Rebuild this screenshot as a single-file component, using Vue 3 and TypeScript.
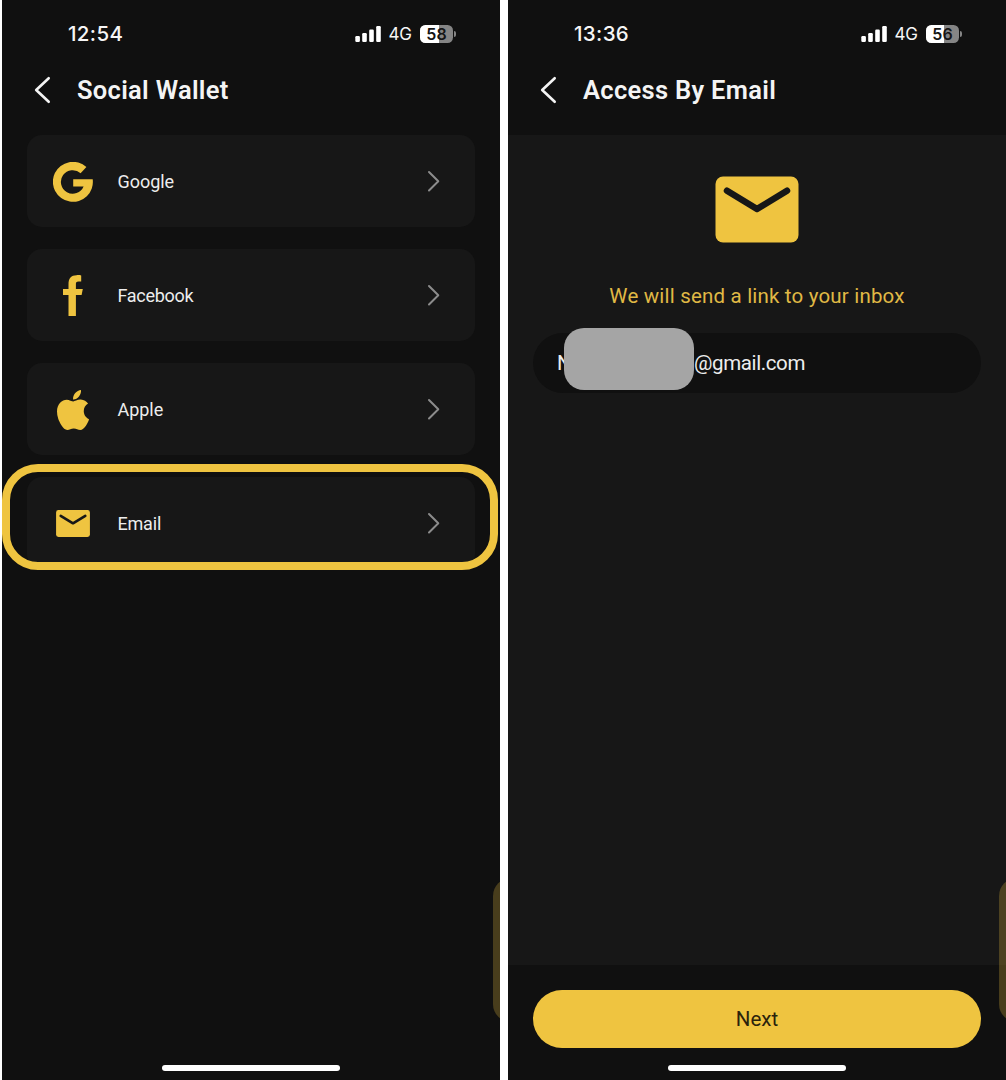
<script setup lang="ts">
type IconName = 'google' | 'facebook' | 'apple' | 'email'

interface Provider {
  name: string
  icon: IconName
  highlighted?: boolean
}

interface Screen {
  id: string
  time: string
  battery: number
  title: string
}

const screens: Screen[] = [
  { id: 'wallet', time: '12:54', battery: 58, title: 'Social Wallet' },
  { id: 'email', time: '13:36', battery: 56, title: 'Access By Email' },
]

const providers: Provider[] = [
  { name: 'Google', icon: 'google' },
  { name: 'Facebook', icon: 'facebook' },
  { name: 'Apple', icon: 'apple' },
  { name: 'Email', icon: 'email', highlighted: true },
]
</script>

<template>
  <main class="board">
    <section v-for="screen in screens" :key="screen.id" class="phone">
      <div class="status">
        <span class="time">{{ screen.time }}</span>
        <div class="indicators">
          <svg class="signal" width="26" height="16" viewBox="0 0 26 16">
            <rect x="0.3" y="10" width="4.6" height="6" rx="1.2" />
            <rect x="7.2" y="7" width="4.6" height="9" rx="1.2" />
            <rect x="14.2" y="3.5" width="4.6" height="12.5" rx="1.2" />
            <rect x="21.2" y="0" width="4.6" height="16" rx="1.2" />
          </svg>
          <span class="network">4G</span>
          <div class="battery">
            <div class="cell">
              <div class="charge" :style="{ width: screen.battery + '%' }"></div>
              <span class="level">{{ screen.battery }}</span>
            </div>
            <div class="cap"></div>
          </div>
        </div>
      </div>

      <header class="header">
        <svg class="back" width="18" height="28" viewBox="0 0 18 28">
          <path d="M15.7 2.2 3.2 14 15.7 25.8" />
        </svg>
        <h1 class="title">{{ screen.title }}</h1>
      </header>

      <div v-if="screen.id === 'wallet'" class="list">
        <div v-for="p in providers" :key="p.name" class="card">
          <div class="icon">
            <svg v-if="p.icon === 'google'" width="40" height="40" viewBox="0 0 40 40">
              <path d="M33.4 5.1A20 20 0 1 0 39.7 17.2H20.2V24.5H30.6A11.8 11.8 0 1 1 27.6 11.2Z" />
            </svg>
            <svg v-else-if="p.icon === 'facebook'" width="20" height="41" viewBox="0 0 20 41">
              <path d="M5.5 41V20H0V14H5.5V9.5C5.5 3 8.2.3 13.5.2 15.5 0 17 .2 18.2.4V6.5H15.5C13.3 6.5 12.9 7.5 12.9 9.3V14H19.8L18.6 20H12.9V41Z" />
            </svg>
            <svg v-else-if="p.icon === 'apple'" width="32" height="40" viewBox="4 32 376 448" preserveAspectRatio="none">
              <path d="M318.7 268.7c-.2-36.7 16.4-64.4 50-84.8-18.8-26.9-47.2-41.7-84.7-44.6-35.5-2.8-74.3 20.7-88.5 20.7-15 0-49.4-19.7-76.4-19.7C63.3 141.2 4 184.8 4 273.5q0 39.3 14.4 81.2c12.8 36.7 59 126.7 107.2 125.2 25.2-.6 43-17.9 75.8-17.9 31.8 0 48.3 17.9 76.4 17.9 48.6-.7 90.4-82.5 102.6-119.3-65.2-30.7-61.7-90-61.7-91.9zm-56.6-164.2c27.3-32.4 24.8-61.9 24-72.5-24.1 1.4-52 16.4-67.9 34.9-17.5 19.8-27.8 44.3-25.6 71.9 26.1 2 49.9-11.4 69.5-34.3z" />
            </svg>
            <svg v-else width="34" height="27" viewBox="0 0 84 67">
              <rect width="84" height="67" rx="6" />
              <path class="flap" d="M11.5 14.5 42 33 72.500 14.500" />
            </svg>
          </div>
          <span class="label" :class="p.icon">{{ p.name }}</span>
          <svg class="chevron" width="13" height="22" viewBox="0 0 13 22">
            <path d="M2 2 11.300 11.200 2 20.500" />
          </svg>
          <div v-if="p.highlighted" class="ring"></div>
        </div>
      </div>

      <template v-else>
        <div class="content">
          <svg class="mail" width="84" height="67" viewBox="0 0 84 67">
            <rect x=".5" y=".5" width="83" height="66" rx="7.500" />
            <path class="flap" d="M12 14.700 42 33 72 14.700" />
          </svg>
          <p class="hint">We will send a link to your inbox</p>
          <div class="field">
            <span class="initial">N</span>
            <span class="domain">@gmail.com</span>
            <div class="mask"></div>
          </div>
        </div>
        <footer class="footer">
          <button class="next" type="button"><span>Next</span></button>
        </footer>
      </template>

      <div class="side-tab"></div>
      <div class="home"></div>
    </section>
  </main>
</template>

<style>
body {
  margin: 0;
  background: #fff;
}
</style>

<style scoped>
* {
  box-sizing: border-box;
}

.board {
  display: flex;
  gap: 8px;
  width: 1006px;
  height: 1080px;
  padding-left: 2px;
  background: #fff;
  font-family: Roboto, "Liberation Sans", sans-serif;
  color: #ededed;
}

.phone {
  position: relative;
  display: flex;
  flex-direction: column;
  width: 498px;
  height: 1080px;
  overflow: hidden;
  background: #101010;
}

.status {
  display: flex;
  justify-content: space-between;
  align-items: center;
  height: 67px;
  padding: 0 44px 0 66px;
  font-family: Inter, sans-serif;
  color: #f6f6f6;
}

.time {
  font-size: 20.5px;
  font-weight: 500;
  letter-spacing: 0.35px;
}

.indicators {
  display: flex;
  align-items: center;
}

.signal {
  fill: #fff;
}

.network {
  margin-left: 8px;
  width: 24px;
  padding-top: 1px;
  font-size: 17px;
  letter-spacing: -0.2px;
  white-space: nowrap;
}

.battery {
  display: flex;
  align-items: center;
  gap: 1px;
  margin-left: 7.5px;
}

.cell {
  position: relative;
  display: flex;
  justify-content: center;
  align-items: center;
  width: 33px;
  height: 18px;
  border-radius: 5.5px;
  overflow: hidden;
  background: #858585;
}

.charge {
  position: absolute;
  inset: 0 auto 0 0;
  background: #fff;
}

.level {
  position: relative;
  font-size: 16px;
  font-weight: 600;
  line-height: 18px;
  color: #151515;
}

.cap {
  width: 2px;
  height: 6px;
  border-radius: 0 2px 2px 0;
  background: #858585;
}

.header {
  display: flex;
  align-items: center;
  height: 68px;
  padding: 0 0 23px 31px;
}

.back {
  fill: none;
  stroke: #f4f4f4;
  stroke-width: 2.6;
  stroke-linecap: round;
  stroke-linejoin: round;
}

.title {
  margin: 0 0 0 26px;
  font-size: 25.5px;
  font-weight: 600;
  line-height: 30px;
  letter-spacing: 0.3px;
  white-space: nowrap;
  color: #f4f4f4;
}

.list {
  display: flex;
  flex-direction: column;
  gap: 22px;
  padding: 0 25px;
}

.card {
  position: relative;
  display: flex;
  align-items: center;
  height: 92px;
  padding: 0 35px 0 22px;
  border-radius: 15px;
  background: #171717;
}

.icon {
  display: flex;
  justify-content: center;
  width: 47px;
  margin-right: 1px;
  padding-top: 1px;
  fill: #efc440;
}

.flap {
  fill: none;
  stroke: #171717;
  stroke-width: 6.5;
  stroke-linecap: round;
  stroke-linejoin: round;
}

.label {
  flex: 1;
  margin-left: 20.5px;
  padding-top: 1px;
  font-size: 18px;
  letter-spacing: -0.05px;
}

.label.facebook {
  letter-spacing: -0.3px;
}

.label.email {
  letter-spacing: -0.2px;
}

.chevron {
  fill: none;
  stroke: #8c8c8c;
  stroke-width: 2;
  stroke-linecap: round;
  stroke-linejoin: round;
}

.ring {
  position: absolute;
  top: -13px;
  left: -25px;
  width: 496px;
  height: 106px;
  border: 8px solid #efc440;
  border-radius: 36px;
}

.content {
  display: flex;
  flex-direction: column;
  align-items: center;
  height: 830px;
  padding: 41px 25px 0;
  background: #171717;
}

.mail {
  fill: #efc440;
}

.hint {
  margin: 38px 0 22px;
  font-size: 20.5px;
  line-height: 30px;
  letter-spacing: 0.19px;
  white-space: nowrap;
  color: #e0b945;
}

.field {
  position: relative;
  display: flex;
  align-items: center;
  width: 448px;
  height: 60px;
  padding-left: 24px;
  border-radius: 30px;
  background: #101010;
  font-size: 20.5px;
}

.initial {
  width: 137px;
}

.domain {
  letter-spacing: -0.38px;
}

.mask {
  position: absolute;
  top: -5px;
  left: 31px;
  width: 130px;
  height: 62px;
  border-radius: 20px;
  background: #a5a5a5;
}

.footer {
  padding: 25px 25px 0;
}

.next {
  display: flex;
  justify-content: center;
  align-items: center;
  width: 448px;
  height: 57.5px;
  padding: 0;
  border: 0;
  border-radius: 29px;
  background: #efc440;
  font-family: inherit;
  font-size: 20.5px;
  color: #2a220c;
}

.side-tab {
  position: absolute;
  top: 878px;
  left: 490.5px;
  width: 40px;
  height: 144px;
  border-radius: 18px;
  background: rgba(239, 196, 64, 0.25);
}

.home {
  position: absolute;
  bottom: 9.5px;
  left: 160px;
  width: 178px;
  height: 5.5px;
  border-radius: 3px;
  background: #fff;
}
</style>
